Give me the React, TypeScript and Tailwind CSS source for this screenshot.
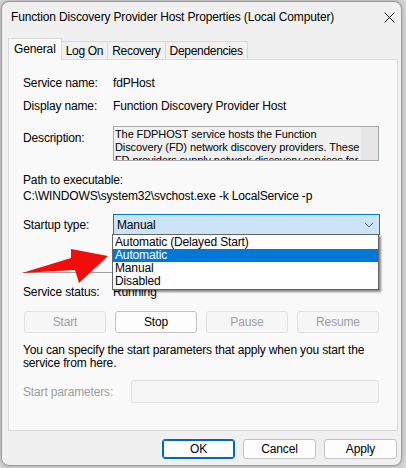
import React from "react";

const font = { fontFamily: '"Liberation Sans", Arial, sans-serif' };

function Tab({ label, active }: { label: string; active?: boolean }) {
  return active ? (
    <div className="relative z-10 -mb-px flex h-[22px] items-center border border-b-0 border-[#d9d9d9] bg-[#f9f9f9] px-[5px] pb-[2px]">
      {label}
    </div>
  ) : (
    <div className="-ml-px mt-[3px] flex h-[18px] items-center border border-b-0 border-[#d9d9d9] bg-[#f0f0f0] px-[4px] tracking-[-0.3px]">
      {label}
    </div>
  );
}

function ActionButton({ label, enabled }: { label: string; enabled?: boolean }) {
  return (
    <div
      className={
        enabled
          ? "flex h-[22px] w-[82px] items-center justify-center rounded-[3px] border border-[#c4c4c4] bg-[#fdfdfd] text-black"
          : "flex h-[22px] w-[82px] items-center justify-center rounded-[3px] border border-[#e0e0e0] bg-[#f6f6f6] text-[#9d9d9d]"
      }
    >
      {label}
    </div>
  );
}

function DialogButton({ label, primary }: { label: string; primary?: boolean }) {
  return (
    <div
      className={
        primary
          ? "flex h-[20px] w-[73px] items-center justify-center rounded-[3px] border border-[#0067c0] bg-[#fdfdfd] shadow-[inset_0_0_0_1px_#0067c0]"
          : "flex h-[20px] w-[73px] items-center justify-center rounded-[3px] border border-[#c4c4c4] bg-[#fdfdfd]"
      }
    >
      {label}
    </div>
  );
}

export default function App() {
  return (
    <div
      className="relative h-[468px] w-[406px] overflow-hidden bg-[#d6d6d6] text-[12px] leading-[16px] tracking-[-0.15px] text-black"
      style={font}
    >
      {/* Properties window */}
      <div className="absolute left-[1px] top-[1px] flex h-[465px] w-[401px] flex-col rounded-[8px] border border-[#9a9a9a] bg-[#f0f0f0] shadow-[0_0_4px_rgba(0,0,0,0.25)]">
        {/* title bar */}
        <div className="flex h-[30px] items-center justify-between pl-[9px] pr-[6px]">
          <span className="text-[12px]">
            Function Discovery Provider Host Properties (Local Computer)
          </span>
          <svg width="11" height="11" viewBox="0 0 11 11">
            <path d="M0.5 0.5 L10.5 10.5 M10.5 0.5 L0.5 10.5" stroke="#1a1a1a" strokeWidth="1" />
          </svg>
        </div>

        {/* tabs */}
        <div className="ml-[6px] mt-[6px] flex items-start">
          <Tab label="General" active />
          <Tab label="Log On" />
          <Tab label="Recovery" />
          <Tab label="Dependencies" />
        </div>

        {/* General page */}
        <div className="ml-[6px] flex h-[372px] w-[390px] flex-col border border-[#d9d9d9] bg-[#f9f9f9] pl-[14px] pt-[15px]">
          <div className="flex h-[16px] items-center">
            <span className="w-[90px]">Service name:</span>
            <span>fdPHost</span>
          </div>
          <div className="mt-[7px] flex h-[16px] items-center">
            <span className="w-[90px]">Display name:</span>
            <span>Function Discovery Provider Host</span>
          </div>
          <div className="mt-[12px] flex">
            <span className="w-[90px] pt-[4px]">Description:</span>
            <div className="flex h-[35px] w-[266px] overflow-hidden border border-[#a9a9a9] bg-[#f0f0f0]">
              <div className="flex-1 overflow-hidden whitespace-nowrap px-[1px] pt-[1px] text-[11px] leading-[13px] tracking-[-0.1px]">
                The FDPHOST service hosts the Function
                <br />
                Discovery (FD) network discovery providers. These
                <br />
                FD providers supply network discovery services for
              </div>
              <div className="w-[17px] shrink-0 bg-[#e6e6e6]" />
            </div>
          </div>
          <div className="mt-[11px] h-[16px]">Path to executable:</div>
          <div className="h-[16px]">C:\WINDOWS\system32\svchost.exe -k LocalService -p</div>
          <div className="mt-[10px] flex items-center">
            <span className="w-[90px]">Startup type:</span>
            <div className="flex h-[21px] w-[267px] items-center justify-between border border-[#0078d4] bg-[#cce4f7] pl-[3px] pr-[5px]">
              <span>Manual</span>
              <svg width="10" height="6" viewBox="0 0 10 6">
                <path d="M1 1 L5 5 L9 1" fill="none" stroke="#606060" strokeWidth="1" />
              </svg>
            </div>
          </div>
          <div className="mt-[37px] h-px w-[355px] bg-[#a0a0a0]" />
          <div className="mt-[11px] flex h-[16px] items-center">
            <span className="w-[90px]">Service status:</span>
            <span>Running</span>
          </div>
          <div className="mt-[11px] flex gap-[9px] pl-[1px]">
            <ActionButton label="Start" />
            <ActionButton label="Stop" enabled />
            <ActionButton label="Pause" />
            <ActionButton label="Resume" />
          </div>
          <div className="mt-[11px] w-[362px] leading-[13px]">
            You can specify the start parameters that apply when you start the service from here.
          </div>
          <div className="mt-[10px] flex items-center">
            <span className="w-[108px] text-[#9d9d9d]">Start parameters:</span>
            <div className="h-[23px] w-[248px] rounded-[2px] border border-[#e3e3e3] bg-[#f6f6f6]" />
          </div>
        </div>

        {/* dialog buttons */}
        <div className="mr-[4px] mt-[8px] flex justify-end gap-[8px]">
          <DialogButton label="OK" primary />
          <DialogButton label="Cancel" />
          <DialogButton label="Apply" />
        </div>
      </div>

      {/* open drop-down list of the startup type box */}
      <div className="absolute left-[112px] top-[234px] flex w-[267px] flex-col border border-[#646464] bg-white py-[1px] shadow-[2px_2px_2px_rgba(0,0,0,0.45)]">
        <div className="h-[13px] pl-[2px] leading-[13px]">Automatic (Delayed Start)</div>
        <div className="h-[13px] bg-[#0078d7] pl-[2px] leading-[13px] text-white">Automatic</div>
        <div className="h-[13px] pl-[2px] leading-[13px]">Manual</div>
        <div className="h-[13px] pl-[2px] leading-[13px]">Disabled</div>
      </div>

      {/* red pointer arrow */}
      <svg className="absolute left-0 top-0" width="406" height="468" viewBox="0 0 406 468">
        <polygon
          points="22,273 71,258 71,249 108,256 79,283 75,270"
          fill="#f20d0d"
        />
      </svg>
    </div>
  );
}
